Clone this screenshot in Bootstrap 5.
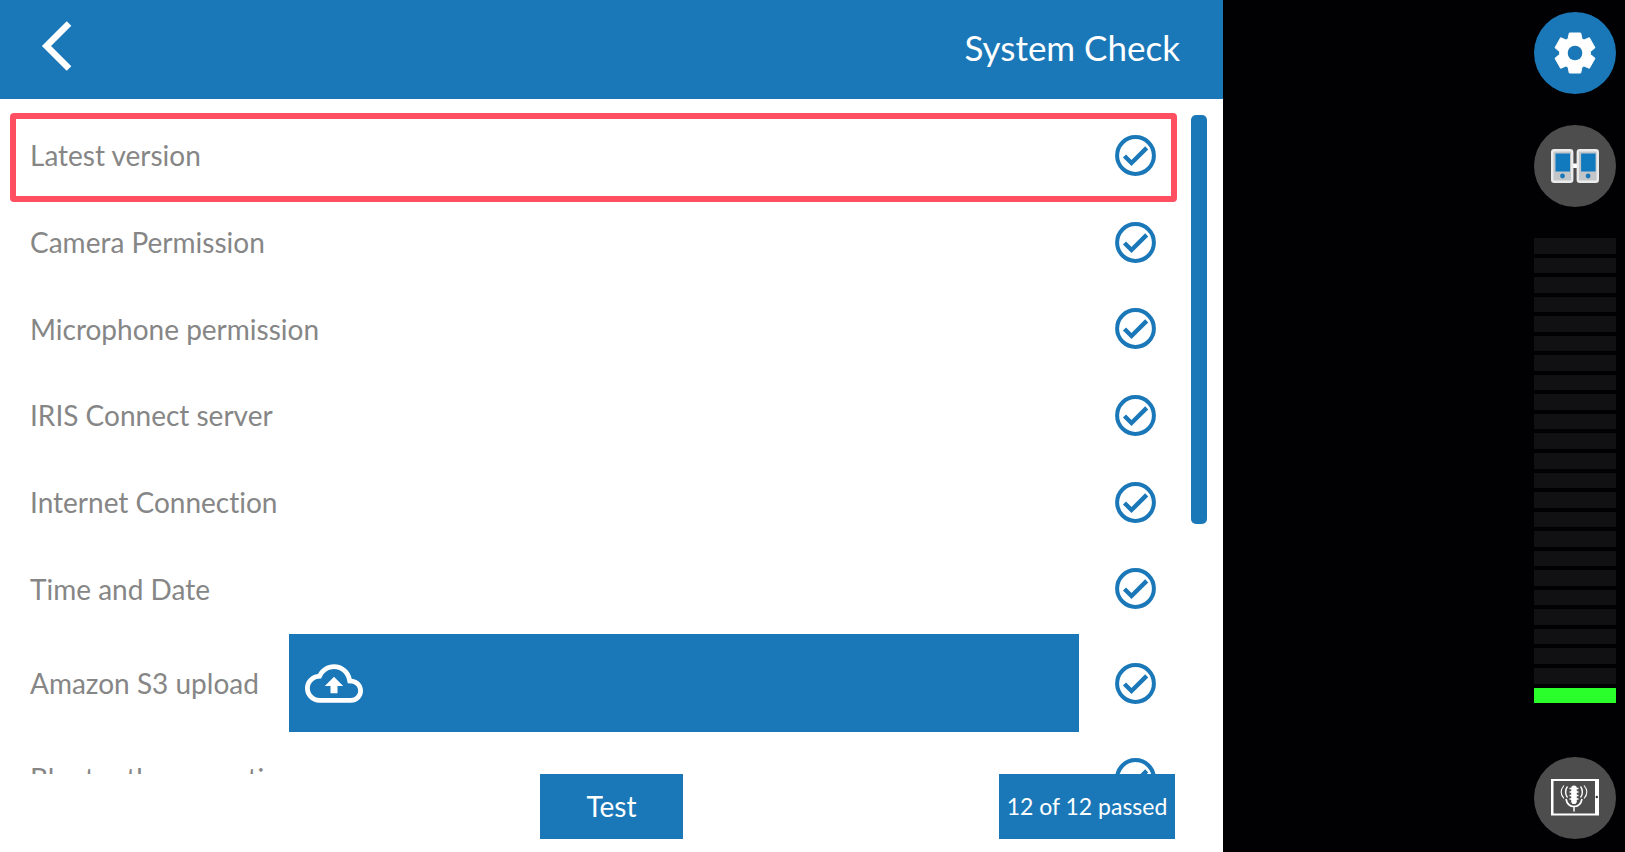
<!DOCTYPE html>
<html lang="en">
<head>
<meta charset="utf-8">
<meta name="viewport" content="width=device-width, initial-scale=1">
<title>System Check</title>
<link href="https://cdn.jsdelivr.net/npm/bootstrap@5.3.0/dist/css/bootstrap.min.css" rel="stylesheet">
<style>
  :root { --brand: #1b78b8; }
  body { font-family: Lato, "Open Sans", sans-serif; font-variant-ligatures: none; background: #010103; }
  .brand-bg { background: var(--brand); }
  .app-header { height: 99px; padding: 0 43px 6px 37px; }
  .app-title { font-size: 35px; line-height: 44px; }
  .back-btn { width: 40px; height: 56px; }
  .check-area { padding: 13px 16px 0 0; }
  .check-row { height: 87px; padding: 0 35px 1px 30px; font-size: 28px; line-height: 34px; color: #868686; }
  .check-row:nth-child(3n) { height: 86px; }
  .check-row.upload-row { height: 103px; }
  .check-icon { width: 41px; height: 41px; }
  .row-highlight { border: 6px solid #ff4f60; border-radius: 4px; inset: 1px 14px -3px 10px; }
  .upload-label { width: 259px; }
  .upload-box { height: 98px; margin-right: 36px; padding-left: 16px; }
  .scroll-thumb { width: 16px; height: 409px; margin-top: 3px; border-radius: 5px; }
  .app-footer { display: grid; grid-template-columns: 1fr 143px 1fr; padding-bottom: 13px; }
  .test-btn { height: 65px; font-size: 28px; line-height: 34px; padding: 0 0 2px; }
  .passed-tag { width: 176px; height: 65px; padding-bottom: 2px; font-size: 23px; line-height: 30px; }
  .side-pane { width: 402px; padding: 12px 9px 13px 0; }
  .round-btn { width: 82px; height: 82px; background: #4d4d4d; }
  .round-btn.brand-bg { background: var(--brand); }
  .paired-btn { margin-top: 31px; }
  .level-meter { width: 82px; gap: 4px; margin: 31px 0 54px; }
  .level-meter span { background: #111012; }
  .level-meter .lit { background: #2bff2b; }
</style>
</head>
<body>
<svg class="d-none" aria-hidden="true">
  <symbol id="tick" viewBox="-20.5 -20.5 41 41">
    <g fill="none" stroke="#1b78b8"><circle r="18.4" stroke-width="4"/><path d="M-11 .5-4 7.500 11.200-7.600" stroke-width="4.400"/></g>
  </symbol>
</svg>
<div class="d-flex vh-100 overflow-hidden">
  <main class="d-flex flex-column flex-grow-1 bg-white">
    <header class="app-header brand-bg d-flex align-items-center justify-content-between flex-shrink-0 text-white">
      <button type="button" class="back-btn btn border-0 p-0 d-flex" aria-label="Back">
        <svg width="40" height="56" viewBox="0 0 40 56" fill="none" stroke="#fff" stroke-width="6.500"><path d="M32 4.500 9.500 27 32 49.500"/></svg>
      </button>
      <h1 class="app-title fw-normal m-0">System Check</h1>
    </header>

    <div class="check-area d-flex flex-grow-1 overflow-hidden">
      <ul class="list-unstyled flex-grow-1 m-0">
        <li class="check-row d-flex align-items-center justify-content-between position-relative">Latest version<svg class="check-icon" role="img" aria-label="Passed"><use href="#tick"/></svg><div class="row-highlight position-absolute"></div></li>
        <li class="check-row d-flex align-items-center justify-content-between">Camera Permission<svg class="check-icon" role="img" aria-label="Passed"><use href="#tick"/></svg></li>
        <li class="check-row d-flex align-items-center justify-content-between">Microphone permission<svg class="check-icon" role="img" aria-label="Passed"><use href="#tick"/></svg></li>
        <li class="check-row d-flex align-items-center justify-content-between">IRIS Connect server<svg class="check-icon" role="img" aria-label="Passed"><use href="#tick"/></svg></li>
        <li class="check-row d-flex align-items-center justify-content-between">Internet Connection<svg class="check-icon" role="img" aria-label="Passed"><use href="#tick"/></svg></li>
        <li class="check-row d-flex align-items-center justify-content-between">Time and Date<svg class="check-icon" role="img" aria-label="Passed"><use href="#tick"/></svg></li>
        <li class="check-row upload-row d-flex align-items-center">
          <span class="upload-label flex-shrink-0">Amazon S3 upload</span>
          <div class="upload-box brand-bg flex-grow-1 d-flex align-items-center">
            <svg width="58" height="39" viewBox="0 4 24 16" fill="#fff"><path d="M19.350 10.040C18.670 6.590 15.640 4 12 4 9.110 4 6.600 5.640 5.350 8.040 2.340 8.360 0 10.910 0 14c0 3.310 2.690 6 6 6h13c2.760 0 5-2.240 5-5 0-2.640-2.050-4.780-4.650-4.960zM19 18H6c-2.210 0-4-1.790-4-4 0-2.050 1.530-3.760 3.560-3.970l1.070-.11.5-.95C8.080 7.140 9.940 6 12 6c2.620 0 4.880 1.860 5.390 4.430l.3 1.500 1.530.11c1.560.1 2.780 1.410 2.780 2.960 0 1.650-1.350 3-3 3zM8.200 13h2.350v3h2.900v-3h2.350L12 9.200z"/></svg>
          </div>
          <svg class="check-icon flex-shrink-0" role="img" aria-label="Passed"><use href="#tick"/></svg>
        </li>
        <li class="check-row d-flex align-items-center justify-content-between">Bluetooth connection<svg class="check-icon" role="img" aria-label="Passed"><use href="#tick"/></svg></li>
      </ul>
      <div class="scroll-thumb brand-bg flex-shrink-0"></div>
    </div>

    <footer class="app-footer flex-shrink-0 bg-white">
      <div></div>
      <button type="button" class="test-btn btn brand-bg text-white border-0 rounded-0">Test</button>
      <div class="d-flex justify-content-end pe-5"><div class="passed-tag brand-bg text-white d-flex align-items-center justify-content-center" role="status">12 of 12 passed</div></div>
    </footer>
  </main>

  <aside class="side-pane d-flex flex-column align-items-end flex-shrink-0">
    <button type="button" class="round-btn brand-bg btn border-0 rounded-circle p-0 d-flex flex-shrink-0" aria-label="Settings">
      <svg width="82" height="82" viewBox="-123 -123 246 246">
        <path fill="#fff" stroke="#fff" stroke-width="3" stroke-linejoin="round" d="M-17-60H17L21-42 27-39 43-46 60-16 46-4V4L60 16 43 46 27 39 21 42 17 60H-17L-21 42-27 39-43 46-60 16-46 4V-4L-60-16-43-46-27-39-21-42Z"/>
        <circle r="22" fill="#1b78b8"/>
      </svg>
    </button>
    <button type="button" class="round-btn paired-btn btn border-0 rounded-circle p-0 d-flex flex-shrink-0" aria-label="Paired devices">
      <svg width="82" height="82" viewBox="0 0 82 82">
        <path d="M39 38.500h5v4.500h-5z" fill="#fff"/>
        <g id="phone"><rect x="18.200" y="25.200" width="20" height="31.600" rx="2" fill="#c3c6c9" stroke="#ebebeb" stroke-width="2.400"/><path d="M21.500 28.500H36V46.500H21.500z" fill="#1179bd"/><circle cx="28.500" cy="51" r="2.400" fill="#1b78b8"/></g>
        <use href="#phone" x="25.600"/>
      </svg>
    </button>
    <div class="level-meter d-flex flex-column flex-grow-1" role="meter" aria-label="Audio level" aria-valuemin="0" aria-valuemax="24" aria-valuenow="1">
      <span class="flex-fill"></span><span class="flex-fill"></span><span class="flex-fill"></span><span class="flex-fill"></span>
      <span class="flex-fill"></span><span class="flex-fill"></span><span class="flex-fill"></span><span class="flex-fill"></span>
      <span class="flex-fill"></span><span class="flex-fill"></span><span class="flex-fill"></span><span class="flex-fill"></span>
      <span class="flex-fill"></span><span class="flex-fill"></span><span class="flex-fill"></span><span class="flex-fill"></span>
      <span class="flex-fill"></span><span class="flex-fill"></span><span class="flex-fill"></span><span class="flex-fill"></span>
      <span class="flex-fill"></span><span class="flex-fill"></span><span class="flex-fill"></span><span class="flex-fill lit"></span>
    </div>
    <button type="button" class="round-btn btn border-0 rounded-circle p-0 d-flex flex-shrink-0" aria-label="Microphone">
      <svg width="82" height="82" viewBox="0 0 82 82" fill="none" stroke="#fff">
        <path d="M17 22H65V58.500H17zM19.500 24V56.500H61V24z" fill="#fff" fill-rule="evenodd" stroke="none"/>
        <circle cx="62.800" cy="40" r="1.200" fill="#333" stroke="none"/>
        <rect x="37.200" y="28.500" width="5.600" height="18.500" rx="2.800" fill="#fff" stroke="none"/>
        <path d="M35.500 31.500h9M35.500 35h9M35.500 38.500h9M35.500 42h9" stroke-width="1.400"/>
        <path d="M32 42c1 5 4 7.500 8 7.500s7-2.500 8-7.500" stroke-width="1.700"/>
        <path d="M40 49v5.500" stroke-width="1.500"/>
        <path d="M33.500 29.500c-2.500 3-2.500 8 0 11M46.500 29.500c2.500 3 2.500 8 0 11" stroke-width="1.400"/>
        <path d="M30 28.500c-3.500 4-3.500 9 0 13M50 28.500c3.500 4 3.500 9 0 13" stroke-width="1.100"/>
      </svg>
    </button>
  </aside>
</div>
<script src="https://cdn.jsdelivr.net/npm/bootstrap@5.3.0/dist/js/bootstrap.bundle.min.js"></script>
</body>
</html>
